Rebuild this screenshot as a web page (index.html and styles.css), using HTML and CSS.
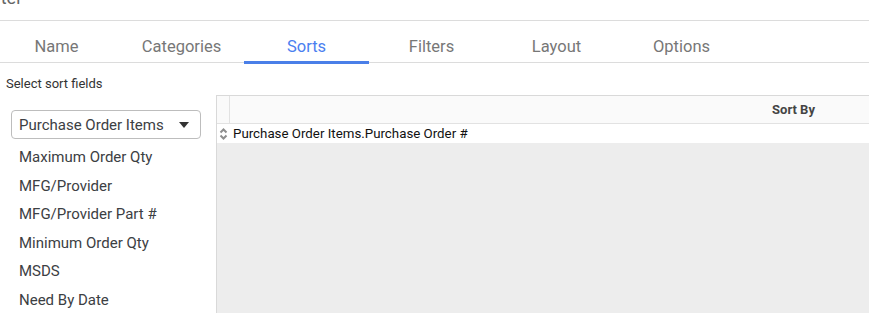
FILE: index.html
```html
<!DOCTYPE html>
<html lang="en">
  <head>
    <meta charset="UTF-8" />
    <meta name="viewport" content="width=device-width, initial-scale=1.0" />
    <title>Report Filter - Sorts</title>
    <link rel="stylesheet" href="styles.css">
  </head>
  <body>
    <div class="dialog">
      <div class="dialog-title">Filter</div>

      <nav class="tabs">
        <div class="tab">Name</div>
        <div class="tab">Categories</div>
        <div class="tab active">Sorts</div>
        <div class="tab">Filters</div>
        <div class="tab">Layout</div>
        <div class="tab">Options</div>
      </nav>

      <div class="sort-pane">
        <aside class="field-picker">
          <div class="picker-label">Select sort fields</div>

          <div class="select">
            <span>Purchase Order Items</span>
            <svg class="caret" width="10" height="6" viewBox="0 0 10 6">
              <path d="M0 0 H10 L5 6 Z" fill="#333" />
            </svg>
          </div>

          <ul class="field-list">
            <li>Maximum Order Qty</li>
            <li>MFG/Provider</li>
            <li>MFG/Provider Part #</li>
            <li>Minimum Order Qty</li>
            <li>MSDS</li>
            <li>Need By Date</li>
          </ul>
        </aside>

        <div class="sort-grid">
          <div class="grid-header">
            <div class="gutter"></div>
            <div class="header-cell">Sort By</div>
          </div>
          <div class="grid-row">
            <div class="row-handle">
              <svg width="9" height="14" viewBox="0 0 9 14">
                <path d="M1.5 5.5 L4.5 2.5 L7.5 5.5" fill="none" stroke="#8e8e8e" stroke-width="2" />
                <path d="M1.5 8.5 L4.5 11.5 L7.5 8.5" fill="none" stroke="#8e8e8e" stroke-width="2" />
              </svg>
            </div>
            <div class="row-cell">Purchase Order Items.Purchase Order #</div>
          </div>
        </div>
      </div>
    </div>
  </body>
</html>
```

FILE: styles.css
```css
* {
  margin: 0;
  padding: 0;
  box-sizing: border-box;
}

body {
  font-family: "Roboto", "Helvetica", "Arial", sans-serif;
  background: #fff;
  width: 869px;
  height: 313px;
  overflow: hidden;
}

.dialog {
  display: flex;
  flex-direction: column;
  height: 313px;
}

.dialog-title {
  height: 33px;
  margin-top: -12px;
  font-size: 18px;
  line-height: 20px;
  color: #666;
  text-indent: -18px;
  border-bottom: 1px solid #dcdcdc;
  white-space: nowrap;
}

/* Tabs */
.tabs {
  display: flex;
  margin-left: -6px;
  border-bottom: 1px solid #dcdcdc;
}

.tab {
  width: 125px;
  padding: 17px 0 6px;
  text-align: center;
  font-size: 16.5px;
  line-height: 18px;
  color: #777;
  position: relative;
}

.tab.active {
  color: #4a80f0;
}

.tab.active::after {
  content: "";
  position: absolute;
  left: 0;
  right: 0;
  bottom: -2px;
  height: 3px;
  background: #4a7fe8;
}

/* Sort pane */
.sort-pane {
  flex: 1;
  display: flex;
  min-height: 0;
}

.field-picker {
  width: 216px;
  flex: none;
  padding: 13px 0 0 6px;
}

.picker-label {
  font-size: 13px;
  line-height: 16px;
  color: #333;
}

.select {
  display: flex;
  align-items: center;
  justify-content: space-between;
  width: 190px;
  height: 29px;
  margin: 18px 0 0 5px;
  padding: 0 11px 0 7px;
  border: 1px solid #bdbdbd;
  border-radius: 4px;
  font-size: 15px;
  color: #3c4043;
}

.field-list {
  list-style: none;
  margin-top: 4px;
  padding-left: 13px;
}

.field-list li {
  height: 28.6px;
  line-height: 28.6px;
  font-size: 15px;
  color: #3c4043;
  white-space: nowrap;
}

/* Sort grid */
.sort-grid {
  flex: none;
  width: 1141px;
  margin-top: 32px;
  background: #ededed;
  border-top: 1px solid #d9d9d9;
  border-left: 1px solid #d9d9d9;
}

.grid-header {
  display: flex;
  height: 28px;
  background: #fafafa;
  border-bottom: 1px solid #e2e2e2;
}

.gutter {
  width: 13px;
  border-right: 1px solid #e2e2e2;
}

.header-cell {
  flex: 1;
  text-align: center;
  font-size: 13px;
  font-weight: bold;
  line-height: 27px;
  color: #444;
}

.grid-row {
  display: flex;
  align-items: center;
  height: 19px;
  background: #fff;
}

.row-handle {
  width: 13px;
  display: flex;
  justify-content: center;
}

.row-handle svg {
  display: block;
}

.row-cell {
  padding-left: 3px;
  font-size: 13.3px;
  color: #111;
  white-space: nowrap;
}
```
